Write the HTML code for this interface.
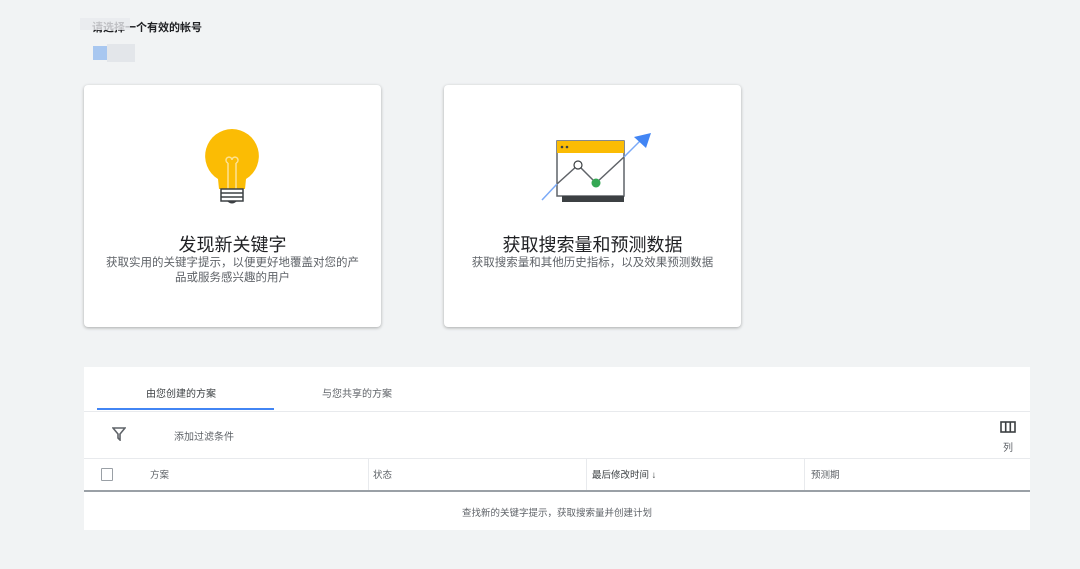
<!DOCTYPE html><html><head><meta charset="utf-8"><style>
body{margin:0;width:1080px;height:569px;background:#f1f3f4;font-family:"Liberation Sans","Noto Sans CJK SC",sans-serif;position:relative;overflow:hidden;color:#3c4043}
.a{position:absolute}
.card{position:absolute;top:85px;width:297px;height:242px;background:#fff;border-radius:4px;box-shadow:0 1px 3px rgba(0,0,0,.3)}
.t{position:absolute;left:0;right:0;text-align:center;font-size:18px;color:#202124;top:146px}
.s{position:absolute;left:0;right:0;text-align:center;font-size:11.5px;line-height:15px;color:#5f6368;top:171px;white-space:nowrap}
.sm{font-size:10px;color:#5f6368}
</style></head><body>
<div class="a" style="left:92px;top:19px;font-size:11px;font-weight:bold;color:#202124">请选择一个有效的帐号</div>
<div class="a" style="left:80px;top:18px;width:50px;height:12px;background:#e8eaed;opacity:.8"></div>
<div class="a" style="left:93px;top:46px;width:14px;height:14px;background:#a8c7f0"></div>
<div class="a" style="left:107px;top:44px;width:28px;height:18px;background:#e3e6ea"></div>

<div class="card" style="left:84px">
<svg class="a" style="left:118px;top:42px" width="60" height="80" viewBox="0 0 60 80">
<path d="M30 2A27 27 0 0 0 16 52L17 62H43L44 52A27 27 0 0 0 30 2Z" fill="#fbbc04"/>
<path d="M26 62V36M34 62V36M26 36a3 3 0 1 1 4 -3M34 36a3 3 0 1 0 -4 -3" stroke="#fde293" stroke-width="1.5" fill="none"/>
<rect x="19" y="62" width="22" height="12" fill="#fff" stroke="#3c4043" stroke-width="1.5"/>
<path d="M19 66H41M19 70H41" stroke="#3c4043" stroke-width="1.5"/>
<path d="M25 74Q30 79 35 74" fill="#3c4043"/></svg>
<div class="t">发现新关键字</div>
<div class="s">获取实用的关键字提示，以便更好地覆盖对您的产<br>品或服务感兴趣的用户</div></div>

<div class="card" style="left:444px">
<svg class="a" style="left:96px;top:48px" width="116" height="72" viewBox="0 0 116 72">
<rect x="17" y="8" width="67" height="55" fill="#fff" stroke="#5f6368" stroke-width="1.5"/>
<rect x="17" y="8" width="67" height="12" fill="#fbbc04"/>
<circle cx="22" cy="14" r="1.3" fill="#3c4043"/><circle cx="27" cy="14" r="1.3" fill="#3c4043"/>
<rect x="22" y="63" width="62" height="6" fill="#3c4043"/>
<path d="M17 51L38 32L56 50L84 24" stroke="#5f6368" stroke-width="1.5" fill="none"/>
<path d="M2 67L17 51M84 24L100 8" stroke="#7baaf7" stroke-width="1.5"/>
<path d="M111 0L94 4L106 15Z" fill="#4285f4"/>
<circle cx="38" cy="32" r="4" fill="#fff" stroke="#3c4043" stroke-width="1.2"/>
<circle cx="56" cy="50" r="4.5" fill="#34a853"/></svg>
<div class="t">获取搜索量和预测数据</div>
<div class="s">获取搜索量和其他历史指标，以及效果预测数据</div></div>

<div class="a" style="left:84px;top:367px;width:946px;height:163px;background:#fff">
<div class="a sm" style="left:62px;top:18px;color:#3c4043">由您创建的方案</div>
<div class="a sm" style="left:238px;top:18px">与您共享的方案</div>
<div class="a" style="left:13px;top:41px;width:177px;height:2px;background:#4285f4"></div>
<div class="a" style="left:0;top:44px;width:946px;height:1px;background:#e8eaed"></div>
<svg class="a" style="left:28px;top:60px" width="14" height="14" viewBox="0 0 14 14"><path d="M1 1H13L8 7V13L6 11V7Z" fill="none" stroke="#5f6368" stroke-width="1.6"/></svg>
<div class="a sm" style="left:90px;top:61px">添加过滤条件</div>
<svg class="a" style="left:916px;top:54px" width="16" height="12" viewBox="0 0 16 12"><rect x="1" y="1" width="14" height="10" fill="none" stroke="#3c4043" stroke-width="1.6"/><path d="M5.7 1V11M10.3 1V11" stroke="#3c4043" stroke-width="1.6"/></svg>
<div class="a sm" style="left:919px;top:72px">列</div>
<div class="a" style="left:0;top:91px;width:946px;height:1px;background:#e8eaed"></div>
<div class="a" style="left:17px;top:101px;width:10px;height:11px;border:1px solid #9aa0a6;border-radius:1px"></div>
<div class="a sm" style="left:66px;top:100px;font-size:9.5px">方案</div>
<div class="a" style="left:284px;top:92px;width:1px;height:31px;background:#e8eaed"></div>
<div class="a sm" style="left:289px;top:100px;font-size:9.5px">状态</div>
<div class="a" style="left:502px;top:92px;width:1px;height:31px;background:#e8eaed"></div>
<div class="a sm" style="left:508px;top:100px;font-size:9.5px;color:#3c4043">最后修改时间 ↓</div>
<div class="a" style="left:720px;top:92px;width:1px;height:31px;background:#e8eaed"></div>
<div class="a sm" style="left:727px;top:100px;font-size:9.5px">预测期</div>
<div class="a" style="left:0;top:123px;width:946px;height:2px;background:#9aa0a6"></div>
<div class="a sm" style="left:0;right:0;top:138px;text-align:center;font-size:9.5px">查找新的关键字提示，获取搜索量并创建计划</div>
</div>
</body></html>
